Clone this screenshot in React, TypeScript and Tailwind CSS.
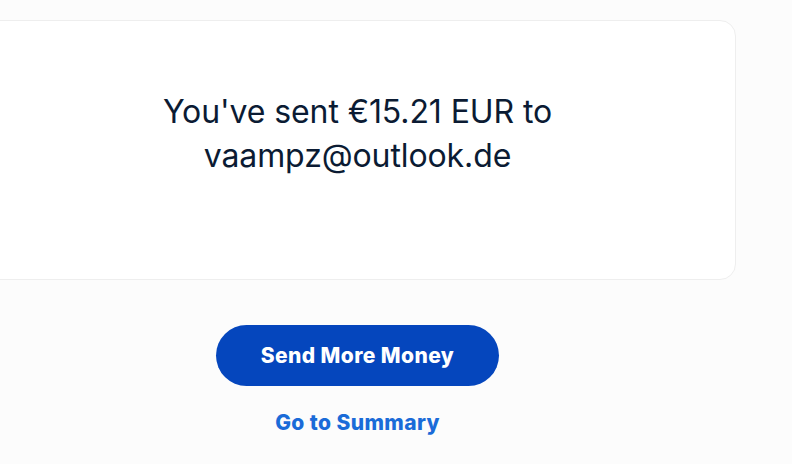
import React from "react";

export default function App() {
  return (
    <div className="w-[800px] h-[464px] overflow-hidden bg-[#fcfcfc] flex" style={{ fontFamily: "Inter, 'Noto Sans', sans-serif" }}>
      <div className="w-[715px] shrink-0 flex flex-col items-center pt-[20px]">
        <div className="w-[757px] h-[260px] shrink-0 bg-white border border-[#eeeeee] rounded-[16px] flex flex-col items-center pt-[69px]">
          <p className="text-[32px] leading-[44px] text-[#0b1b33] text-center tracking-[-0.1px]">
            You've sent €15.21 EUR to
            <br />
            vaampz@outlook.de
          </p>
        </div>
        <button className="mt-[45px] w-[283px] h-[61px] shrink-0 rounded-full bg-[#0546bd] text-white text-[21px] font-extrabold tracking-[0.4px]">
          Send More Money
        </button>
        <a className="mt-[22px] text-[21px] leading-[30px] font-extrabold text-[#1a6bd8] tracking-[0.4px]">Go to Summary</a>
      </div>
      <div className="flex-1" />
      <div className="w-[8px] bg-white" />
    </div>
  );
}
